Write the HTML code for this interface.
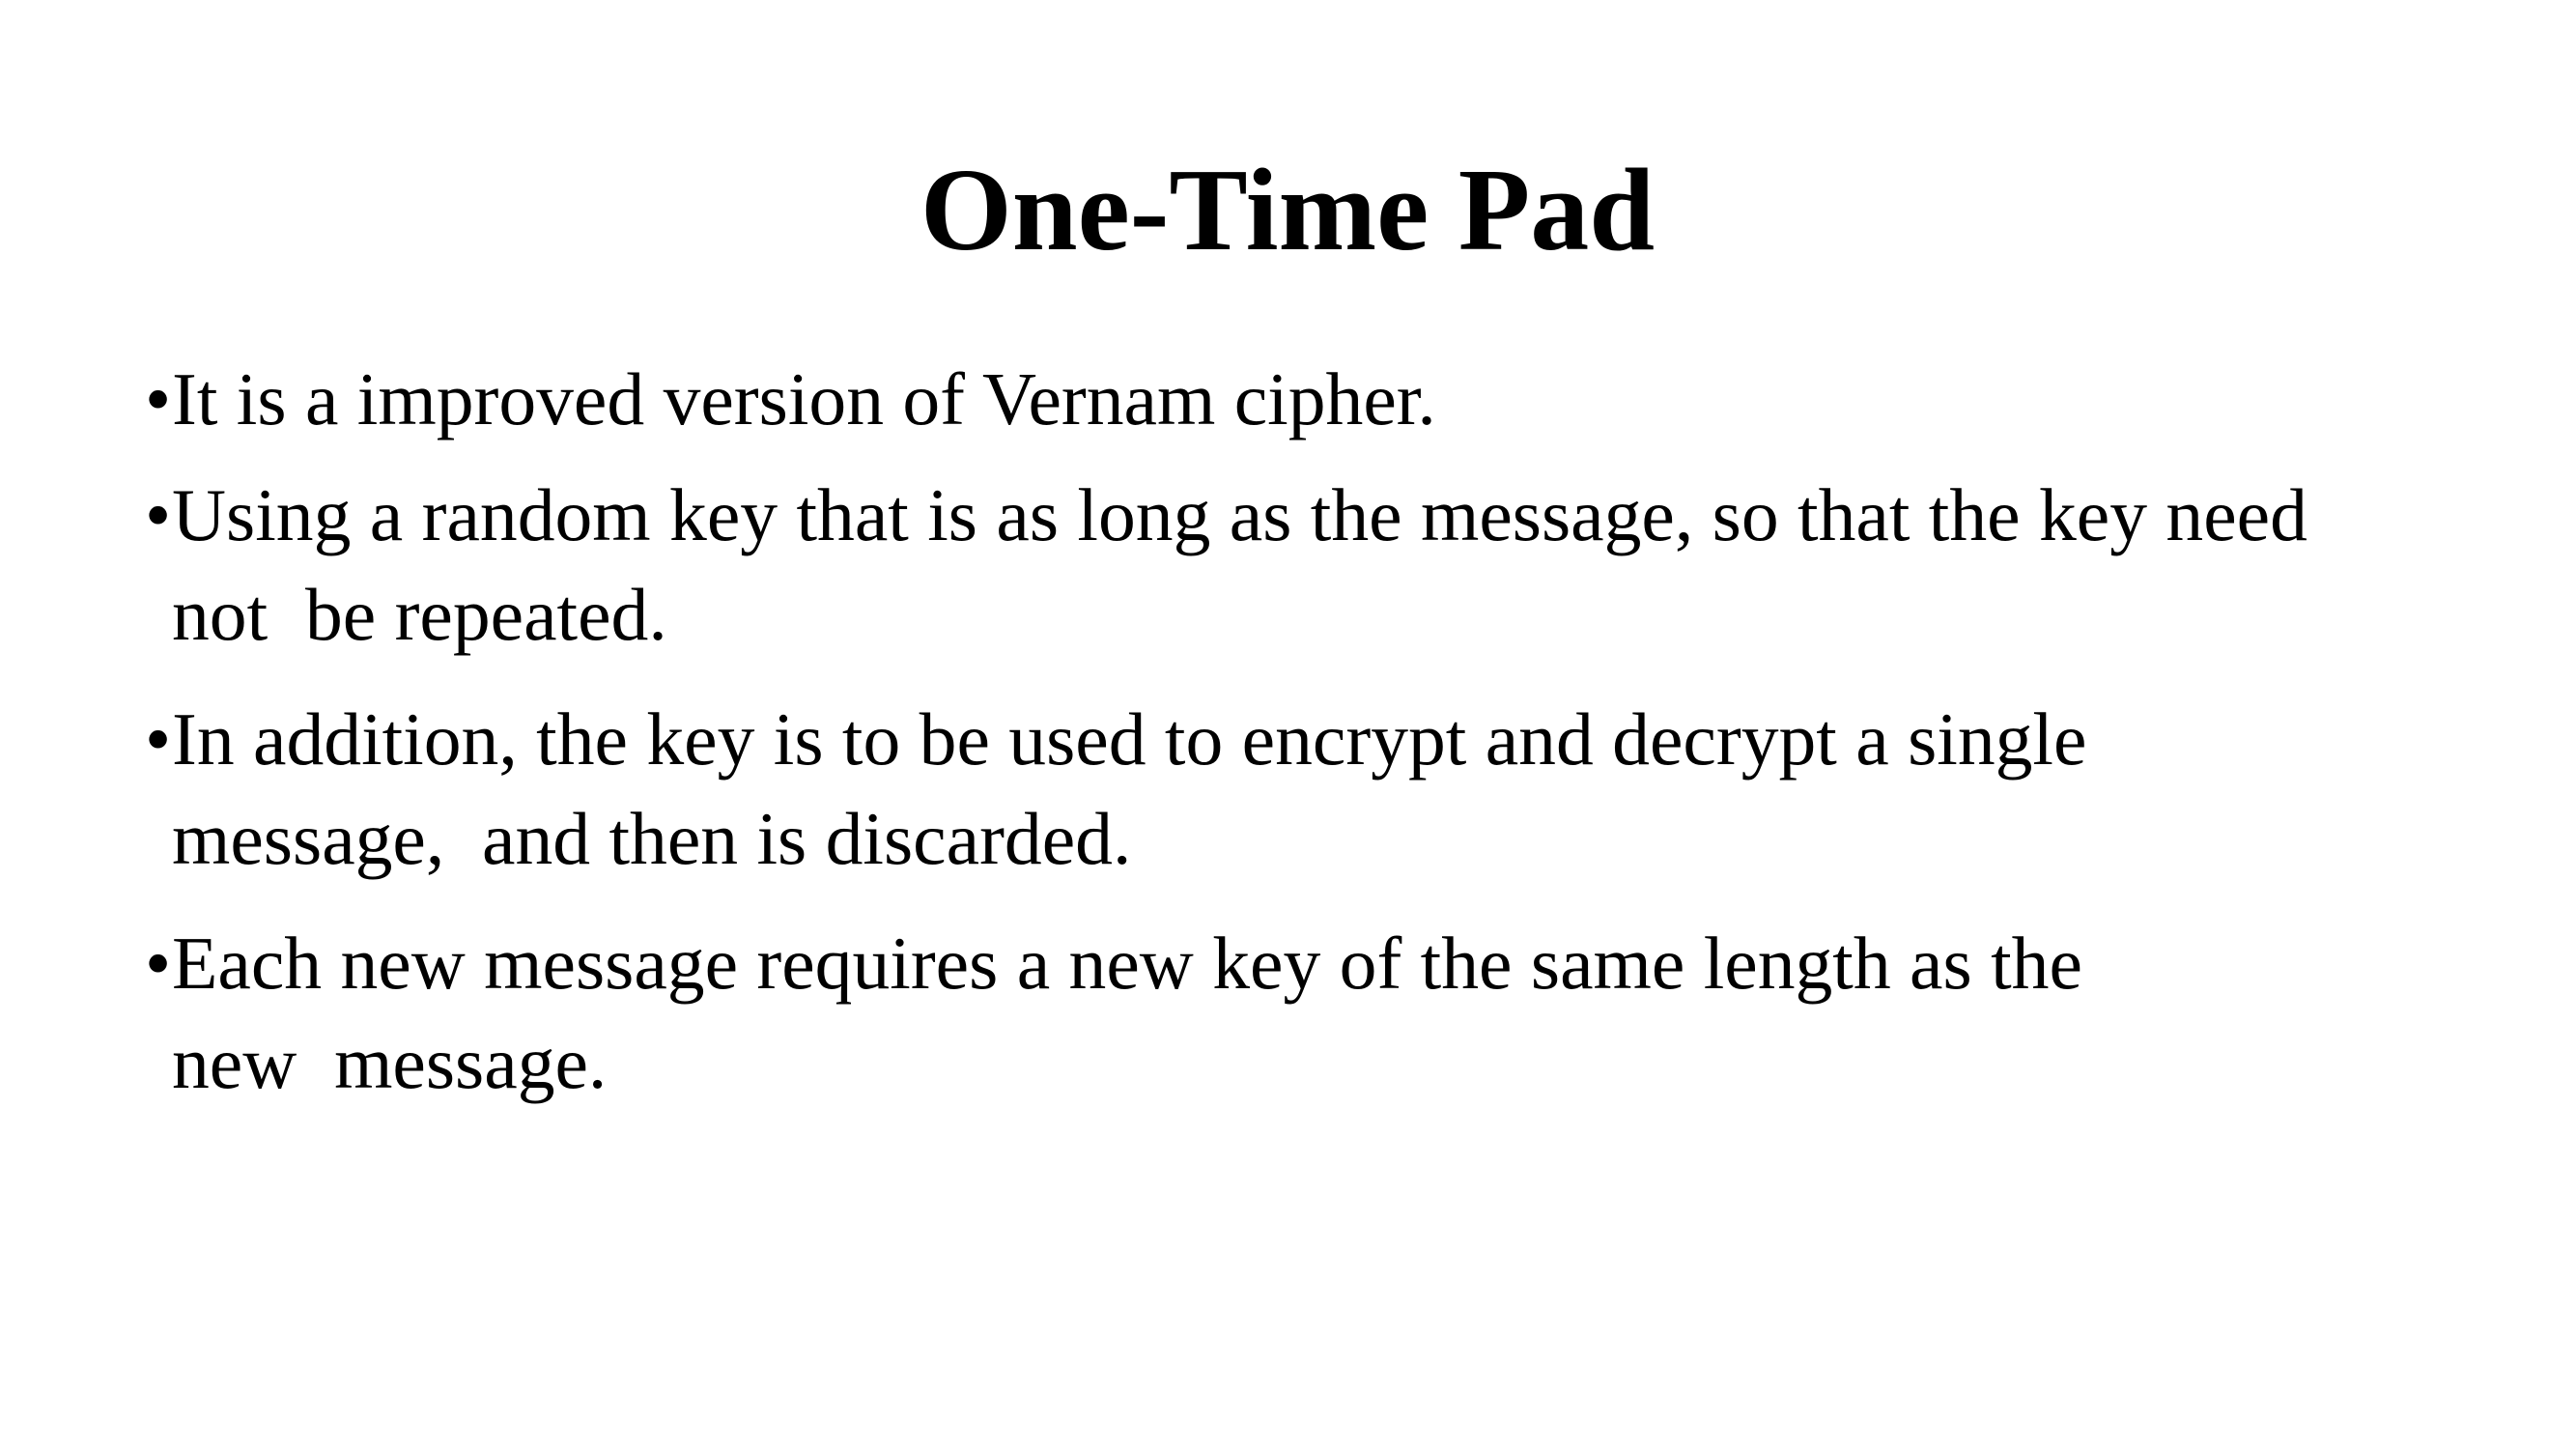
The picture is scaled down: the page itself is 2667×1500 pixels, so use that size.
<!DOCTYPE html>
<html><head><meta charset="utf-8"><style>
html,body{margin:0;padding:0;background:#fff;}
body{width:2667px;height:1500px;position:relative;overflow:hidden;font-family:"Liberation Serif","Times New Roman",serif;color:#000;}
.t{position:absolute;left:0;width:2666px;text-align:center;font-weight:bold;font-size:122px;line-height:1;top:157px;}
.l{position:absolute;font-size:77.6px;line-height:1;white-space:pre;left:178px;}
.b{position:absolute;font-size:77.6px;line-height:1;left:150px;}
</style></head><body>
<div class="t">One-Time Pad</div>
<div class="b" style="top:375px">•</div><div class="l" style="top:375px">It is a improved version of Vernam cipher.</div>
<div class="b" style="top:495px">•</div><div class="l" style="top:495px">Using a random key that is as long as the message, so that the key need</div>
<div class="l" style="top:598px">not  be repeated.</div>
<div class="b" style="top:727px">•</div><div class="l" style="top:727px">In addition, the key is to be used to encrypt and decrypt a single</div>
<div class="l" style="top:830px">message,  and then is discarded.</div>
<div class="b" style="top:959px">•</div><div class="l" style="top:959px">Each new message requires a new key of the same length as the</div>
<div class="l" style="top:1062px">new  message.</div>
</body></html>
